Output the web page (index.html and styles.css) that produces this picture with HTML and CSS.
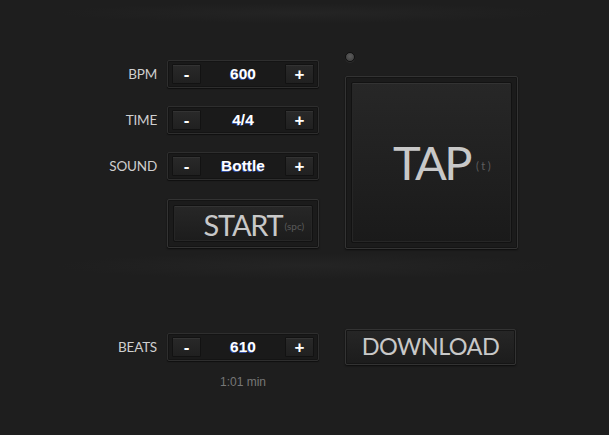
FILE: index.html
```html
<!DOCTYPE html>
<html lang="en">
<head>
<meta charset="utf-8">
<title>Metronome</title>
<link rel="stylesheet" href="styles.css">
</head>
<body>
<main class="app">
  <section class="top">
    <div class="controls">
      <div class="row">
        <span class="label">BPM</span>
        <div class="stepper">
          <button class="step">-</button>
          <span class="value">600</span>
          <button class="step">+</button>
        </div>
      </div>
      <div class="row">
        <span class="label">TIME</span>
        <div class="stepper">
          <button class="step">-</button>
          <span class="value">4/4</span>
          <button class="step">+</button>
        </div>
      </div>
      <div class="row">
        <span class="label">SOUND</span>
        <div class="stepper">
          <button class="step">-</button>
          <span class="value">Bottle</span>
          <button class="step">+</button>
        </div>
      </div>
      <div class="row row-start">
        <span class="label"></span>
        <div class="frame start-frame">
          <button class="big start"><span class="word">START<small class="hint hint-spc">(spc)</small></span></button>
        </div>
      </div>
    </div>
    <div class="tap-col">
      <span class="led"></span>
      <div class="frame tap-frame">
        <button class="big tap"><span class="word">TAP<small class="hint hint-t">(t)</small></span></button>
      </div>
    </div>
  </section>
  <section class="bottom">
    <div class="controls controls-bottom">
      <div class="row">
        <span class="label">BEATS</span>
        <div class="stepper">
          <button class="step">-</button>
          <span class="value">610</span>
          <button class="step">+</button>
        </div>
      </div>
      <div class="duration">1:01 min</div>
    </div>
    <button class="download">DOWNLOAD</button>
  </section>
</main>
</body>
</html>
```
FILE: styles.css
```css
html, body {
  margin: 0;
  padding: 0;
}
body {
  width: 609px;
  height: 435px;
  overflow: hidden;
  background:
    radial-gradient(ellipse 250px 10px at 307px 13px, #242424, rgba(36,36,36,0)),
    radial-gradient(ellipse 250px 13px at 307px 266px, #242424, rgba(36,36,36,0)),
    #1e1e1e;
  font-family: "Lato", "DejaVu Sans", sans-serif;
  color: #ccc;
}
button {
  font: inherit;
  color: inherit;
  padding: 0;
  margin: 0;
  cursor: pointer;
}
.app {
  padding-left: 97px;
}
.top {
  display: flex;
  align-items: flex-start;
  gap: 26px;
  padding-top: 52px;
}
.controls {
  display: flex;
  flex-direction: column;
  gap: 18px;
  padding-top: 8px;
}
.row {
  display: flex;
  align-items: center;
  gap: 10px;
}
.row-start {
  margin-top: 1px;
}
.label {
  width: 60px;
  text-align: right;
  font-size: 13.5px;
  color: #cfcfcf;
  letter-spacing: -0.2px;
}
.stepper {
  box-sizing: border-box;
  width: 152px;
  height: 28px;
  display: flex;
  align-items: center;
  justify-content: space-between;
  padding: 0 4px;
  background: #1a1a1a;
  border: 1px solid #2e2e2e;
  border-radius: 2px;
  box-shadow: inset 0 0 0 1px #141414, 0 1px 1px rgba(0,0,0,0.5);
}
.step {
  box-sizing: border-box;
  width: 29px;
  height: 20px;
  background: linear-gradient(#292929, #202020);
  border: 1px solid #121212;
  border-radius: 1px;
  box-shadow: inset 0 1px 0 #333;
  color: #fff;
  font-family: "Liberation Sans", Arial, sans-serif;
  font-weight: bold;
  font-size: 17px;
  line-height: 17px;
}
.value {
  flex: 1;
  text-align: center;
  font-family: "Liberation Sans", Arial, sans-serif;
  font-weight: bold;
  font-size: 15.5px;
  color: #fff;
  text-shadow: -0.5px 0.5px 0.5px rgba(70,110,230,0.7);
}
.frame {
  box-sizing: border-box;
  border: 1px solid #333;
  border-radius: 2px;
  background: #1b1b1b;
  box-shadow: inset 0 0 0 1px #141414, 0 1px 2px rgba(0,0,0,0.6);
  padding: 5px;
}
.start-frame {
  width: 152px;
  height: 49px;
}
.big {
  box-sizing: border-box;
  width: 100%;
  height: 100%;
  display: flex;
  align-items: center;
  justify-content: center;
  border: 1px solid #121212;
  border-radius: 2px;
  box-shadow: inset 0 1px 0 #333, inset 0 0 0 1px #262626;
  background: linear-gradient(#272727, #1c1c1c);
  color: #c8c8c8;
}
.word {
  position: relative;
  display: inline-block;
}
.start {
  font-size: 29px;
  letter-spacing: -1.2px;
  line-height: 1;
  padding-top: 1px;
}
.hint {
  position: absolute;
  left: 100%;
  font-size: 10px;
  color: #5a5a5a;
  letter-spacing: 0;
  white-space: nowrap;
}
.hint-spc {
  bottom: 8px;
  margin-left: 2px;
}
.tap-col {
  display: flex;
  flex-direction: column;
  align-items: flex-start;
  gap: 14px;
}
.led {
  box-sizing: border-box;
  width: 10px;
  height: 10px;
  border-radius: 50%;
  background: radial-gradient(circle at 50% 40%, #5c5c5c, #3a3a3a);
  border: 1px solid #111;
  box-shadow: 0 1px 0 #2c2c2c;
}
.tap-frame {
  width: 173px;
  height: 173px;
}
.tap {
  font-size: 47px;
  letter-spacing: -2.5px;
  line-height: 1;
  background: linear-gradient(#272727, #1a1a1a);
}
.hint-t {
  bottom: 15px;
  margin-left: 6px;
  font-size: 11px;
  letter-spacing: 2.5px;
  color: #5e5e5e;
}
.bottom {
  display: flex;
  align-items: flex-start;
  gap: 26px;
  padding-top: 80px;
}
.controls-bottom {
  padding-top: 4px;
  gap: 14px;
}
.duration {
  margin-left: 70px;
  width: 152px;
  text-align: center;
  font-family: "Liberation Sans", Arial, sans-serif;
  font-size: 12px;
  color: #777;
}
.download {
  box-sizing: border-box;
  width: 171px;
  height: 36px;
  background: linear-gradient(#262626, #1c1c1c);
  border: 1px solid #333;
  border-radius: 2px;
  box-shadow: inset 0 0 0 1px #151515, 0 1px 2px rgba(0,0,0,0.6);
  font-size: 23.5px;
  letter-spacing: -0.6px;
  color: #c8c8c8;
  line-height: 1;
}
```
